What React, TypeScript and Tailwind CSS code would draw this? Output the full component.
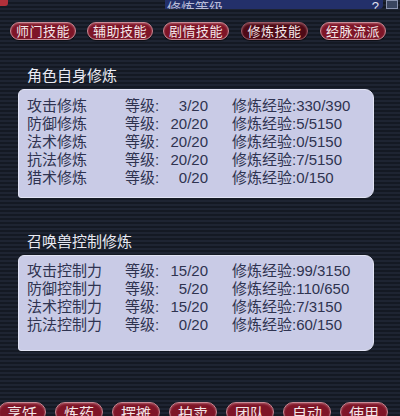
import React from "react";

const tabs = ["师门技能", "辅助技能", "剧情技能", "修炼技能", "经脉流派"];

const selfRows = [
  { name: "攻击修炼", level: "3/20", exp: "330/390" },
  { name: "防御修炼", level: "20/20", exp: "5/5150" },
  { name: "法术修炼", level: "20/20", exp: "0/5150" },
  { name: "抗法修炼", level: "20/20", exp: "7/5150" },
  { name: "猎术修炼", level: "0/20", exp: "0/150" },
];

const petRows = [
  { name: "攻击控制力", level: "15/20", exp: "99/3150" },
  { name: "防御控制力", level: "5/20", exp: "110/650" },
  { name: "法术控制力", level: "15/20", exp: "7/3150" },
  { name: "抗法控制力", level: "0/20", exp: "60/150" },
];

const bottomButtons = ["烹饪", "炼药", "摆摊", "拍卖", "团队", "自动", "使用"];

// Liberation Sans first keeps line boxes compact; CJK glyphs fall back to Noto
const font = "font-['Liberation_Sans','Noto_Sans_CJK_SC',sans-serif]";

const RedButton = ({ label, active, className }: { label: string; active?: boolean; className?: string }) => (
  <div
    className={`flex items-center justify-center rounded-full border leading-none text-[#f3e6e8] shadow-[inset_0_1px_2px_rgba(255,200,210,0.35),0_1px_1px_rgba(0,0,0,0.6)] ${
      active ? "border-[#9c5a66] bg-[#4e0a16]" : "border-[#c98a95] bg-[#7e1527]"
    } ${className ?? ""}`}
  >
    {label}
  </div>
);

const Section = ({
  title,
  rows,
  pad,
}: {
  title: string;
  rows: { name: string; level: string; exp: string }[];
  pad: string;
}) => (
  <div className="flex flex-col">
    <div className="pl-[27px] text-[15px] leading-[18px] text-[#e9eaf2]">{title}</div>
    <div
      className={`mx-[18px] mt-[4px] w-[356px] rounded-tl-[6px] rounded-tr-[9px] rounded-br-[9px] rounded-bl-[3px] border border-[#e2e4f4] bg-[#c9cbe6] pl-[8px] ${pad}`}
    >
      {rows.map((r) => (
        <div key={r.name} className="flex h-[18px] items-center text-[15px] leading-[18px] text-[#2f3350]">
          <span className="w-[98px]">{r.name}</span>
          <span className="w-[36px]">等级:</span>
          <span className="w-[47px] text-right">{r.level}</span>
          <span className="ml-[24px]">修炼经验:{r.exp}</span>
        </div>
      ))}
    </div>
  </div>
);

export default function App() {
  return (
    <div
      className={`${font} relative flex h-[416px] w-[400px] flex-col overflow-hidden bg-[#181d28] bg-[repeating-linear-gradient(180deg,#1e2432_0px,#1e2432_2px,#141923_2px,#141923_4px)]`}
    >
      {/* title bar */}
      <div className="flex h-[9px] items-end">
        <div className="h-[6px] w-[8px] self-start rounded-br-[3px] bg-[#b0303a]" />
        <div className="ml-[157px] flex h-[9px] w-[218px] items-end overflow-hidden rounded-br-[4px] bg-[#23306a]">
          <span className="-mb-[6px] ml-[2px] text-[14px] leading-[14px] text-[#b8bcd8]">修炼等级</span>
          <span className="ml-auto -mb-[5px] mr-[4px] text-[13px] leading-[14px] text-[#e0e2ee]">?</span>
        </div>
        <div className="ml-[3px] h-[9px] w-[12px] border border-[#8a94b0] bg-[#3a4660]" />
      </div>

      {/* tabs */}
      <div className="mt-[13px] flex pl-[10px] text-[13px] tracking-[0.5px]">
        <RedButton label={tabs[0]} className="h-[18px] w-[66px]" />
        <RedButton label={tabs[1]} className="ml-[11px] h-[18px] w-[66px]" />
        <RedButton label={tabs[2]} className="ml-[10px] h-[18px] w-[66px]" />
        <RedButton label={tabs[3]} active className="ml-[12px] h-[18px] w-[67px]" />
        <RedButton label={tabs[4]} className="ml-[12px] h-[18px] w-[66px]" />
      </div>

      <div className="mt-[27px]">
        <Section title="角色自身修炼" rows={selfRows} pad="pt-[7px] pb-[10px]" />
      </div>

      <div className="mt-[35px]">
        <Section title="召唤兽控制修炼" rows={petRows} pad="pt-[6px] pb-[16px]" />
      </div>

      {/* bottom buttons */}
      <div className="mt-auto flex -translate-x-[2px] translate-y-[6px] gap-[9px] text-[15px]">
        {bottomButtons.map((b) => (
          <RedButton key={b} label={b} className="h-[20px] w-[48px] items-start pt-[3px]" />
        ))}
      </div>
    </div>
  );
}
